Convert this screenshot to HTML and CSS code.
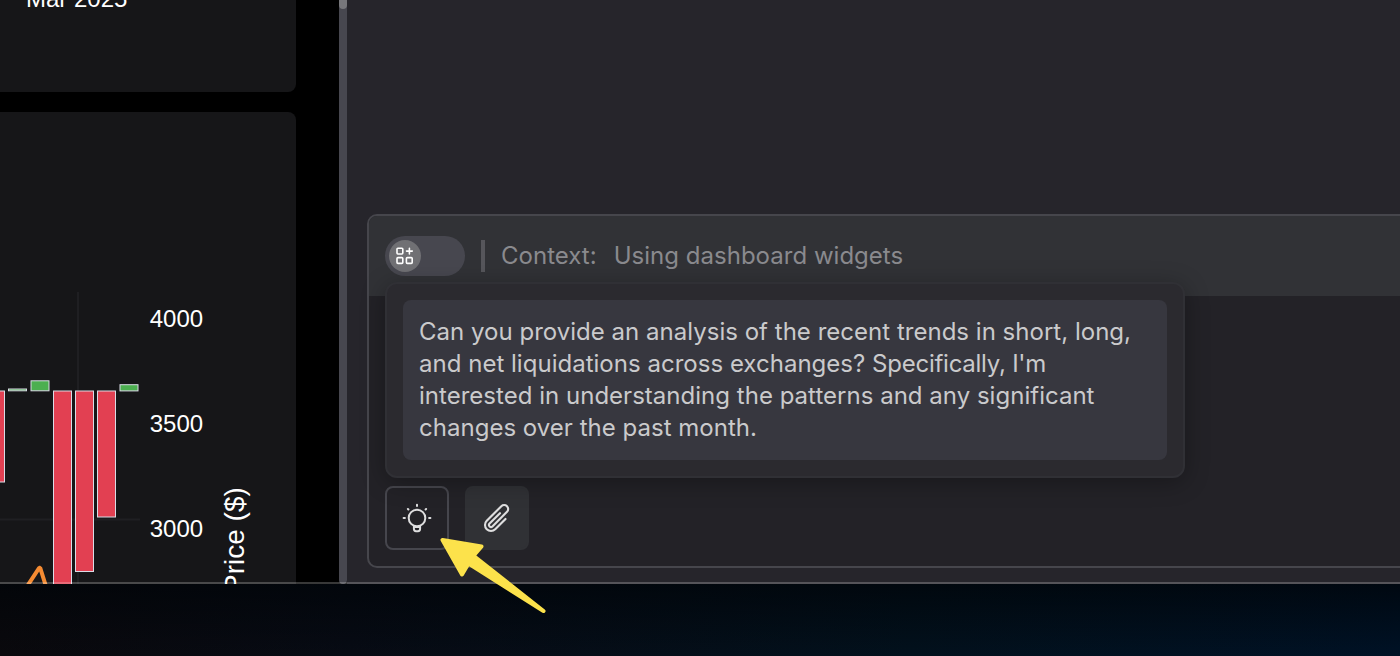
FILE: index.html
```html
<!DOCTYPE html>
<html lang="en">
<head>
<meta charset="utf-8">
<title>Dashboard copilot</title>
<link rel="stylesheet" href="styles.css">
</head>
<body>
<div class="app">
  <main class="dashboard">
    <section class="widget widget-top"><span class="month">Mar 2025</span></section>
    <section class="widget widget-chart">
      <svg class="chart" width="296" height="472" viewBox="0 112 296 472">
        <path class="grid" d="M78 292V584M0 519.5H140"/>
        <g class="bar down">
          <rect x="-14" y="391" width="18.5" height="91"/>
          <rect x="53.5" y="391" width="18" height="200"/>
          <rect x="75.5" y="391" width="18" height="180.5"/>
          <rect x="97.5" y="391" width="18" height="126"/>
        </g>
        <g class="bar up">
          <rect x="8.5" y="389" width="18" height="1.8"/>
          <rect x="31" y="380.8" width="18" height="10"/>
          <rect x="120" y="384.7" width="18" height="6.2"/>
        </g>
        <path class="price" d="M26 588L39.2 567.8H40.2L46.5 588"/>
        <g class="ticks">
          <text x="149.7" y="327">4000</text>
          <text x="149.7" y="432">3500</text>
          <text x="149.7" y="537">3000</text>
        </g>
        <text class="axis" transform="translate(244 593) rotate(-90)">Price ($)</text>
      </svg>
    </section>
  </main>
  <div class="splitter"><div class="thumb"></div></div>
  <aside class="copilot">
    <div class="composer">
      <header class="context">
        <div class="toggle">
          <div class="knob">
            <svg width="18" height="18" viewBox="0 0 18 18">
              <rect x="1" y="1.2" width="5.8" height="5.8" rx="0.9"/>
              <rect x="1" y="10.6" width="5.8" height="5.8" rx="0.9"/>
              <rect x="10.4" y="10.6" width="5.8" height="5.8" rx="0.9"/>
              <path d="M13.4 1.2V7M10.5 4.1H16.3"/>
            </svg>
          </div>
        </div>
        <div class="divider"></div>
        <span class="label">Context:</span>
        <span class="value">Using dashboard widgets</span>
      </header>
      <div class="actions">
        <button class="action outlined" aria-label="Suggestions">
          <svg width="32" height="32" viewBox="0 0 32 32">
            <circle cx="16" cy="16" r="8.3"/>
            <path d="M12.9 24V26.8Q12.9 29.2 15 29.2H17Q19.1 29.2 19.1 26.8V24M13 25H19"/>
            <path d="M16 2.8V4M2.6 16H3.9M28.1 16H29.4M6.9 7L7.4 7.5M25.1 7L24.6 7.5"/>
          </svg>
        </button>
        <button class="action filled" aria-label="Attach">
          <svg class="clip" width="32" height="32" viewBox="0 0 24 24">
            <path d="m18.375 12.739-7.693 7.693a4.5 4.5 0 0 1-6.364-6.364l10.94-10.94A3 3 0 1 1 19.5 7.372L8.552 18.32m.009-.01-.01.01m5.699-9.941-7.81 7.81a1.5 1.5 0 0 0 2.112 2.13"/>
          </svg>
        </button>
      </div>
      <div class="popover">
        <p class="prompt">Can you provide an analysis of the recent trends in short, long,<br>and net liquidations across exchanges? <span class="tight">Specifically, I'm</span><br>interested in understanding the patterns and any significant<br>changes over the past month.</p>
      </div>
    </div>
  </aside>
</div>
<svg class="pointer" width="112" height="82" viewBox="436 534 112 82">
  <path d="M442.5 540L481.5 546.5L473.5 555.8L543.5 611L468.5 563.5L462 574.5Z"/>
</svg>
</body>
</html>
```
FILE: styles.css
```css
* { box-sizing: border-box; }
body {
  margin: 0;
  width: 1400px;
  height: 656px;
  overflow: hidden;
  position: relative;
  font-family: Inter, "Liberation Sans", sans-serif;
  background:
    linear-gradient(to bottom, rgba(0, 4, 8, 0.7) 584px, rgba(0, 4, 8, 0) 656px),
    linear-gradient(to right, #0a090d 0%, #070b14 25%, #02111d 65%, #001226 100%);
}
.app {
  display: flex;
  height: 584px;
  position: relative;
  overflow: hidden;
  background: #000;
}
.app::after {
  content: "";
  position: absolute;
  inset: auto 0 0 0;
  height: 2px;
  background: rgba(255, 255, 255, 0.22);
}
.dashboard {
  width: 339px;
  display: flex;
  flex-direction: column;
  gap: 20px;
}
.widget { width: 296px; background: #161618; overflow: hidden; }
.widget-top { height: 92px; border-radius: 0 0 8px 0; flex: none; }
.widget-chart { height: 472px; border-radius: 0 8px 0 0; flex: none; }
.month {
  display: block;
  margin: -15px 0 0 26px;
  font: 24px/28px "Liberation Sans", Arial, sans-serif;
  color: #fff;
}
.chart { display: block; font-family: "Liberation Sans", Arial, sans-serif; }
.grid { stroke: #1f1f22; stroke-width: 2; fill: none; }
.bar { stroke: #dadbe6; stroke-width: 1; }
.down { fill: #e24052; }
.up { fill: #4caf50; }
.price { fill: none; stroke: #f58b32; stroke-width: 4; stroke-linejoin: bevel; }
.ticks { font-size: 24px; fill: #fff; }
.axis { font-size: 28px; fill: #fff; }
.splitter { width: 8px; background: #47474f; flex: none; border-radius: 0 0 4px 4px; }
.thumb { height: 9px; background: #77777b; border-radius: 0 0 4px 4px; }
.copilot {
  flex: 1;
  min-width: 0;
  padding: 214px 0 0 20px;
  background: #26252b;
}
.composer {
  position: relative;
  width: 1060px;
  height: 354px;
  display: flex;
  flex-direction: column;
  justify-content: space-between;
  border: 2px solid #46464c;
  border-radius: 10px;
  background: #232227;
}
.context {
  height: 80px;
  display: flex;
  align-items: center;
  padding-left: 16px;
  border-radius: 8px 8px 0 0;
  background: #313236;
  font-size: 24px;
  letter-spacing: 0.02px;
  color: #8a8a8e;
  white-space: nowrap;
}
.label, .value { padding-bottom: 2px; }
.toggle { width: 80px; height: 40px; padding: 4px; border-radius: 20px; background: #47474f; }
.knob {
  width: 32px;
  height: 32px;
  display: grid;
  place-items: center;
  border-radius: 50%;
  background: #707074;
}
.knob svg { fill: none; stroke: #fff; stroke-width: 1.6; stroke-linecap: round; }
.divider { width: 4px; height: 32px; margin: 0 16px; background: #56565b; }
.value { margin-left: 17px; }
.actions { display: flex; gap: 16px; padding: 0 0 16px 16px; }
.action {
  width: 64px;
  height: 64px;
  padding: 0;
  display: grid;
  place-items: center;
  border: 2px solid #46464d;
  border-radius: 8px;
  background: transparent;
}
.filled { background: #303135; border-color: #303135; }
.action svg {
  fill: none;
  stroke: #dededf;
  stroke-width: 2;
  stroke-linecap: round;
  stroke-linejoin: round;
}
.action .clip { stroke-width: 1.6; }
.popover {
  position: absolute;
  left: 16px;
  top: 66px;
  width: 800px;
  height: 196px;
  padding: 16px;
  border: 2px solid #303035;
  border-radius: 12px;
  background: #2b2a2f;
  box-shadow: 0 4px 24px rgba(0, 0, 0, 0.3);
}
.prompt {
  margin: 0;
  height: 160px;
  padding: 16px;
  border-radius: 8px;
  background: #37373f;
  font-size: 24px;
  letter-spacing: 0.02px;
  line-height: 32px;
  white-space: nowrap;
  color: #cacacc;
}
.tight { letter-spacing: -0.25px; }
.pointer { position: absolute; left: 436px; top: 534px; }
.pointer path { fill: #fce24b; stroke: #fce24b; stroke-width: 4; stroke-linejoin: round; }
```
